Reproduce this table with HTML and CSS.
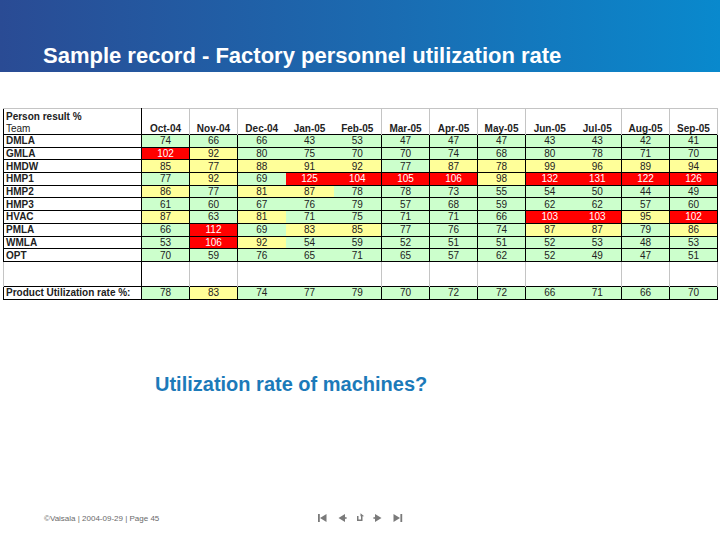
FILE: index.html
```
<!DOCTYPE html>
<html>
<head>
<meta charset="utf-8">
<link rel="stylesheet" href="styles.css">
</head>
<body>
<div class="slide">
  <header class="banner">
    <h1 class="title">Sample record - Factory personnel utilization rate</h1>
  </header>
  <main class="content">
    <table class="grid">
      <colgroup>
        <col class="c-label">
        <col class="c-m"><col class="c-m"><col class="c-m"><col class="c-m"><col class="c-m"><col class="c-m">
        <col class="c-m"><col class="c-m"><col class="c-m"><col class="c-m"><col class="c-m"><col class="c-m">
      </colgroup>
      <tr class="hrow top">
        <th class="lbl head-lbl top-lbl">Person result %</th>
        <td class="v"></td><td class="v"></td><td class="v"></td><td></td><td></td><td class="v"></td>
        <td class="v"></td><td class="v"></td><td class="v"></td><td></td><td class="v"></td><td class="v last"></td>
      </tr>
      <tr class="hrow">
        <th class="lbl head-lbl team">Team</th>
        <th class="v">Oct-04</th><th class="v">Nov-04</th><th class="v">Dec-04</th><th>Jan-05</th><th>Feb-05</th><th class="v">Mar-05</th>
        <th class="v">Apr-05</th><th class="v">May-05</th><th class="v">Jun-05</th><th>Jul-05</th><th class="v">Aug-05</th><th class="v last">Sep-05</th>
      </tr>
      <tr class="drow">
        <th class="lbl">DMLA</th>
        <td class="v g">74</td><td class="v g">66</td><td class="v g">66</td><td class="g">43</td><td class="g">53</td><td class="v g">47</td>
        <td class="v g">47</td><td class="v g">47</td><td class="v g">43</td><td class="g">43</td><td class="v g">42</td><td class="v last g">41</td>
      </tr>
      <tr class="drow">
        <th class="lbl">GMLA</th>
        <td class="v r">102</td><td class="v y">92</td><td class="v g">80</td><td class="g">75</td><td class="g">70</td><td class="v g">70</td>
        <td class="v g">74</td><td class="v g">68</td><td class="v g">80</td><td class="g">78</td><td class="v g">71</td><td class="v last g">70</td>
      </tr>
      <tr class="drow">
        <th class="lbl">HMDW</th>
        <td class="v y">85</td><td class="v y">77</td><td class="v y">88</td><td class="y">91</td><td class="y">92</td><td class="v g">77</td>
        <td class="v y">87</td><td class="v y">78</td><td class="v y">99</td><td class="y">96</td><td class="v y">89</td><td class="v last y">94</td>
      </tr>
      <tr class="drow">
        <th class="lbl">HMP1</th>
        <td class="v g">77</td><td class="v y">92</td><td class="v g">69</td><td class="r">125</td><td class="r">104</td><td class="v r">105</td>
        <td class="v r">106</td><td class="v y">98</td><td class="v r">132</td><td class="r">131</td><td class="v r">122</td><td class="v last r">126</td>
      </tr>
      <tr class="drow">
        <th class="lbl">HMP2</th>
        <td class="v y">86</td><td class="v g">77</td><td class="v y">81</td><td class="y">87</td><td class="g">78</td><td class="v g">78</td>
        <td class="v g">73</td><td class="v g">55</td><td class="v g">54</td><td class="g">50</td><td class="v g">44</td><td class="v last g">49</td>
      </tr>
      <tr class="drow">
        <th class="lbl">HMP3</th>
        <td class="v g">61</td><td class="v g">60</td><td class="v g">67</td><td class="g">76</td><td class="g">79</td><td class="v g">57</td>
        <td class="v g">68</td><td class="v g">59</td><td class="v g">62</td><td class="g">62</td><td class="v g">57</td><td class="v last g">60</td>
      </tr>
      <tr class="drow">
        <th class="lbl">HVAC</th>
        <td class="v y">87</td><td class="v g">63</td><td class="v y">81</td><td class="g">71</td><td class="g">75</td><td class="v g">71</td>
        <td class="v g">71</td><td class="v g">66</td><td class="v r">103</td><td class="r">103</td><td class="v y">95</td><td class="v last r">102</td>
      </tr>
      <tr class="drow">
        <th class="lbl">PMLA</th>
        <td class="v g">66</td><td class="v r">112</td><td class="v g">69</td><td class="y">83</td><td class="y">85</td><td class="v g">77</td>
        <td class="v g">76</td><td class="v g">74</td><td class="v y">87</td><td class="y">87</td><td class="v g">79</td><td class="v last y">86</td>
      </tr>
      <tr class="drow">
        <th class="lbl">WMLA</th>
        <td class="v g">53</td><td class="v r">106</td><td class="v y">92</td><td class="g">54</td><td class="g">59</td><td class="v g">52</td>
        <td class="v g">51</td><td class="v g">51</td><td class="v g">52</td><td class="g">53</td><td class="v g">48</td><td class="v last g">53</td>
      </tr>
      <tr class="drow">
        <th class="lbl">OPT</th>
        <td class="v g">70</td><td class="v g">59</td><td class="v g">76</td><td class="g">65</td><td class="g">71</td><td class="v g">65</td>
        <td class="v g">57</td><td class="v g">62</td><td class="v g">52</td><td class="g">49</td><td class="v g">47</td><td class="v last g">51</td>
      </tr>
      <tr class="brow">
        <th class="lbl blank-lbl"></th>
        <td class="v"></td><td class="v"></td><td class="v"></td><td></td><td></td><td class="v"></td>
        <td class="v"></td><td class="v"></td><td class="v"></td><td></td><td class="v"></td><td class="v last"></td>
      </tr>
      <tr class="brow">
        <th class="lbl blank-lbl"></th>
        <td class="v"></td><td class="v"></td><td class="v"></td><td></td><td></td><td class="v"></td>
        <td class="v"></td><td class="v"></td><td class="v"></td><td></td><td class="v"></td><td class="v last"></td>
      </tr>
      <tr class="drow total">
        <th class="lbl">Product Utilization rate %:</th>
        <td class="v g">78</td><td class="v y">83</td><td class="v g">74</td><td class="g">77</td><td class="g">79</td><td class="v g">70</td>
        <td class="v g">72</td><td class="v g">72</td><td class="v g">66</td><td class="g">71</td><td class="v g">66</td><td class="v last g">70</td>
      </tr>
    </table>
    <p class="question">Utilization rate of machines?</p>
  </main>
  <footer class="foot">
    <span class="foot-text">©Vaisala | 2004-09-29 | Page 45</span>
    <svg class="nav" width="90" height="10" viewBox="0 0 90 10" aria-hidden="true">
      <g fill="#7a7a7a">
        <rect x="0" y="1" width="1.8" height="8"/>
        <polygon points="8.5,1 8.5,9 2,5"/>
        <polygon points="27,1 27,9 20.5,5"/>
        <rect x="27" y="4.2" width="1.6" height="1.6"/>
        <path d="M39 3 V8 H44.5 V3 H43 V6.4 H40.5 V3 Z"/>
        <polygon points="42.5,0.3 46.2,3.2 42.5,3.2"/>
        <rect x="55.4" y="4.2" width="1.6" height="1.6"/>
        <polygon points="57,1 57,9 63.5,5"/>
        <polygon points="75.5,1 75.5,9 82,5"/>
        <rect x="82.4" y="1" width="1.8" height="8"/>
      </g>
    </svg>
  </footer>
</div>
</body>
</html>
```
FILE: styles.css
```
html, body {
  margin: 0;
  padding: 0;
  background: #ffffff;
}

body {
  width: 720px;
  height: 540px;
  overflow: hidden;
  font-family: "Liberation Sans", Arial, sans-serif;
}

.slide {
  display: flex;
  flex-direction: column;
  height: 540px;
}

.banner {
  height: 72px;
  box-sizing: border-box;
  display: flex;
  align-items: flex-end;
  padding-left: 43px;
  background: linear-gradient(90deg, #2a4b94 0%, #1a6cb2 55%, #0989cd 100%);
}

.title {
  margin: 0 0 5px;
  color: #ffffff;
  font-size: 22px;
  font-weight: bold;
  line-height: 22px;
}

.content {
  display: flex;
  flex-direction: column;
}

.grid {
  margin: 36px 0 0 3px;
  border-collapse: collapse;
  table-layout: fixed;
  width: 714px;
  font-size: 10px;
  color: #222222;
  border-top: 1px solid #c4c4c4;
}

.c-label { width: 138px; }
.c-m { width: 48px; }

.grid th,
.grid td {
  padding: 0 2px;
  line-height: 11px;
  text-align: center;
  font-weight: normal;
  white-space: nowrap;
  overflow: hidden;
}

.grid .lbl {
  text-align: left;
  font-weight: bold;
  border-left: 1px solid #000;
  border-right: 1px solid #000;
  padding-left: 2px;
}

.hrow { height: 13px; }
.hrow th, .hrow td { vertical-align: bottom; }
.hrow th { font-weight: bold; }
.hrow .v { border-left: 1px solid #c4c4c4; }
.hrow .last { border-right: 1px solid #c4c4c4; }
.hrow .team { font-weight: normal; border-bottom: 1px solid #000; }
.hrow .top-lbl { border-top: 1px solid #c4c4c4; }

.drow { height: 12.7px; }
.drow th, .drow td {
  border-bottom: 1px solid #000;
  border-top: 1px solid #000;
}
.drow .v { border-left: 1px solid #000; }
.drow .last { border-right: 1px solid #000; }

.brow { height: 12.5px; }
.brow .v { border-left: 1px solid #c4c4c4; }
.brow .last { border-right: 1px solid #c4c4c4; }
.grid .blank-lbl { border-left: 1px solid #c4c4c4; border-right: 1px solid #000; }

.total { height: 13px; }

.g { background: #ccffcc; }
.y { background: #ffff99; }
.r { background: #ff0000; color: #ffffff; }

.question {
  margin: 72px 0 0 155px;
  color: #1c7ab9;
  font-size: 20px;
  font-weight: bold;
  line-height: 24px;
}

.foot {
  margin-top: auto;
  margin-bottom: 16px;
  display: flex;
  align-items: center;
  padding-left: 44px;
  height: 12px;
}

.foot-text {
  width: 274px;
  font-size: 8px;
  color: #6a6a6a;
}

.nav {
  display: block;
}
```
